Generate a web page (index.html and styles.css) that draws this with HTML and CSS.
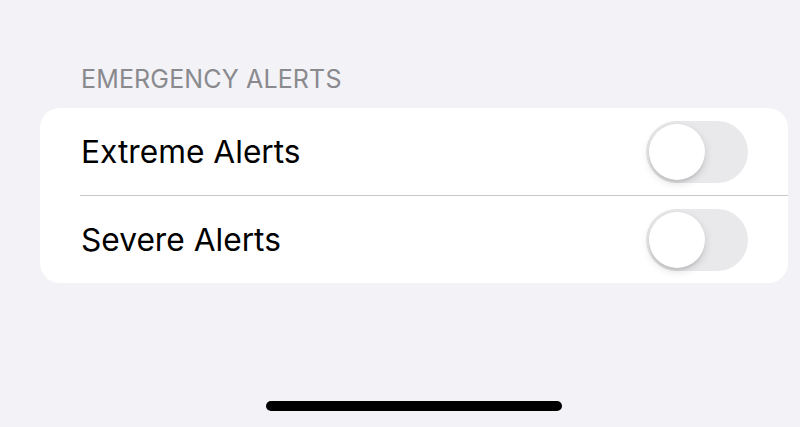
FILE: index.html
```html
<!DOCTYPE html>
<html>
<head>
<meta charset="utf-8">
<link rel="stylesheet" href="styles.css">
</head>
<body>
<div class="screen">
  <div class="section-header">EMERGENCY ALERTS</div>
  <div class="card">
    <div class="row">
      <span class="label">Extreme Alerts</span>
      <span class="toggle"><span class="knob"></span></span>
    </div>
    <div class="sep"></div>
    <div class="row">
      <span class="label">Severe Alerts</span>
      <span class="toggle"><span class="knob"></span></span>
    </div>
  </div>
  <div class="home-bar"></div>
</div>
</body>
</html>
```
FILE: styles.css
```css
html, body {
  margin: 0;
  padding: 0;
  background: #f2f2f7;
}
.screen {
  height: 427px;
  display: flex;
  flex-direction: column;
  font-family: Inter, "Liberation Sans", sans-serif;
  overflow: hidden;
}
.section-header {
  margin: 64px 0 0 81px;
  font-size: 25px;
  line-height: 30px;
  color: #8a8a8e;
  letter-spacing: 0.15px;
}
.card {
  margin: 14px 12px 0 40px;
  background: #ffffff;
  border-radius: 20px;
  display: flex;
  flex-direction: column;
}
.row {
  height: 87px;
  display: flex;
  align-items: center;
  justify-content: space-between;
  padding: 0 40px 0 41px;
}
.label {
  font-size: 31.7px;
  color: #000;
}
.sep {
  height: 1px;
  background: #c8c8cc;
  margin-left: 40px;
}
.toggle {
  width: 102px;
  height: 62px;
  border-radius: 31px;
  background: #e9e9eb;
  display: flex;
  align-items: center;
  padding-left: 3px;
  box-sizing: border-box;
}
.knob {
  width: 56px;
  height: 56px;
  border-radius: 50%;
  background: #fff;
  box-shadow: 0 3px 8px rgba(0,0,0,0.15), 0 3px 1px rgba(0,0,0,0.06);
}
.home-bar {
  margin: auto auto 16px 266px;
  width: 296px;
  height: 10px;
  border-radius: 5px;
  background: #000;
}
```
